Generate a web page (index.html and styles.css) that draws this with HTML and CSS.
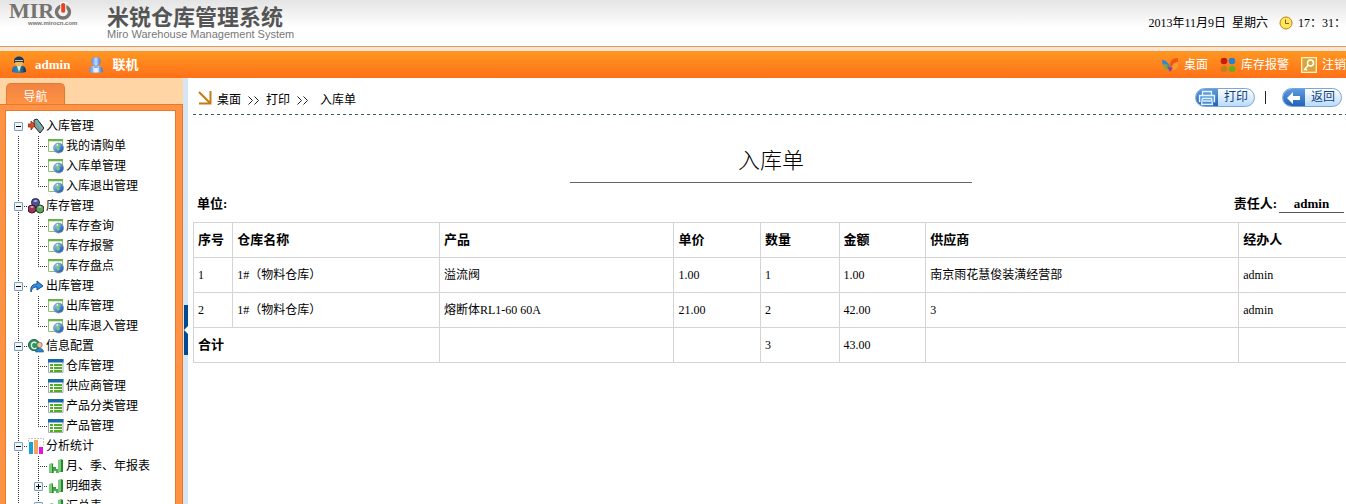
FILE: index.html
```html
<!DOCTYPE html>
<html lang="zh-CN">
<head>
<meta charset="utf-8">
<title>米锐仓库管理系统</title>
<link rel="stylesheet" href="styles.css">
</head>
<body>
<svg class="sprite" width="0" height="0" aria-hidden="true">
  <defs>
    <linearGradient id="blueG" x1="0" y1="0" x2="1" y2="1"><stop offset="0" stop-color="#9fd0f8"/><stop offset="1" stop-color="#104a9c"/></linearGradient>
    <linearGradient id="bodyG" x1="0" y1="0" x2="1" y2="0"><stop offset="0" stop-color="#2c66c0"/><stop offset=".5" stop-color="#2f8f9a"/><stop offset="1" stop-color="#0b2a66"/></linearGradient>
    <linearGradient id="paleG" x1="0" y1="0" x2="1" y2="0"><stop offset="0" stop-color="#5a8ee4"/><stop offset=".5" stop-color="#c3dafb"/><stop offset="1" stop-color="#4474cc"/></linearGradient>
    <linearGradient id="greenG" x1="0" y1="0" x2="0" y2="1"><stop offset="0" stop-color="#7fca7c"/><stop offset=".5" stop-color="#2c9a38"/><stop offset="1" stop-color="#5fba5f"/></linearGradient>
  </defs>
  <symbol id="page" viewBox="0 0 16 16"><path d="M.5 2.500h14v11H.5z" fill="#fff" stroke="#8cc46a"/><path d="M0 1h15v2H0z" fill="#6fb04e"/><path d="M1 3h13v1H1z" fill="#cfeabc"/><circle cx="10.500" cy="10" r="5" fill="url(#blueG)" stroke="#5b87b8" stroke-width=".6"/><path d="M8 7l3-1 2 2-2 1 1 2-2 2-2-3-1-1z" fill="#7cc39b"/><path d="M8 7l2-1v2z" fill="#fff"/></symbol>
  <symbol id="sheet" viewBox="0 0 16 16"><path d="M.5 1.500h14.500v13H.5z" fill="#fff" stroke="#a5adb5"/><path d="M0 1h15.500v3.500H0z" fill="#1769a8"/><path d="M2 6h3v2H2zm0 3h3v2H2zm0 3h3v2H2zM6 6h8v2H6zm0 3h8v2H6zm0 3h8v2H6z" fill="#4fae22"/></symbol>
  <symbol id="bars" viewBox="0 0 16 16"><path d="M1 6h4v3h3v2h2V2h5v12h-4v1H8v-2H6v2H1z" fill="url(#greenG)"/><path d="M1 6l3-1v9l-3 1zm9-4l3-1v12l-3 1z" fill="#7ccc7b"/><path d="M4 5l1 1v9H4zM13 1l2 1v12h-2z" fill="#218a2e"/></symbol>
  <symbol id="chart" viewBox="0 0 16 16"><path d="M.5 4V.5h15v7" fill="none" stroke="#c4c4c4" stroke-dasharray="2 1"/><path d="M1 4h4v12H1z" fill="#15a2d7"/><path d="M6 2h4v14H6z" fill="#f5a45d"/><path d="M11 9h4v7h-4z" fill="#e411df"/></symbol>
  <symbol id="inbound" viewBox="0 0 16 16"><path d="M6 2l3-1 7 9-4 5-6-7z" fill="#8d9695" stroke="#222"/><path d="M8 2l6 9" stroke="#50c6c2" stroke-width="1.500"/><path d="M0 6h3V3l4 4-4 5V9H0z" fill="#e84a26" stroke="#6a2510" stroke-width=".7"/></symbol>
  <symbol id="cubes" viewBox="0 0 16 16"><circle cx="7.500" cy="4.500" r="4" fill="#4c529c" stroke="#20224b"/><circle cx="4" cy="11" r="4" fill="#a03357" stroke="#421629"/><circle cx="12" cy="11" r="4" fill="#5da459" stroke="#204923"/><path d="M5 3l3-1 2 1-3 1zM2 9l2-1 2 1-2 1zm8 0l2-1 2 1-2 1z" fill="#d5c5df"/></symbol>
  <symbol id="outbound" viewBox="0 0 16 16"><path d="M3 14c-1-6 2-8 6-8V3l6 5-6 4V9c-3 0-5 1-6 5z" fill="#2e8ee6" stroke="#174d91"/></symbol>
  <symbol id="config" viewBox="0 0 16 16"><circle cx="6" cy="7" r="5.500" fill="#2d9460" stroke="#1d5d3f"/><path d="M8.500 5C5 3 3 5 3.500 8s3 3 5 2" fill="none" stroke="#dcf7e4" stroke-width="1.400"/><circle cx="11.500" cy="7" r="2.700" fill="#edc39a" stroke="#67472d" stroke-width=".6"/><path d="M7.500 14c0-5 8-5 8 0z" fill="#2c88ce" stroke="#184c80" stroke-width=".6"/></symbol>
</svg>

<header class="masthead">
  <div class="logo">
    <div class="logo-mark"><span>MIR</span><svg width="18" height="18" viewBox="0 0 18 18"><ellipse cx="9" cy="10" rx="6.500" ry="6" fill="none" stroke="#77736f" stroke-width="3.400"/><path d="M6.300 0h6v10h-6z" fill="#fff"/><path d="M7.200 2q2-2 4 0v8q-2 1.500-4 0z" fill="#e8431c"/></svg></div>
    <div class="logo-url">www.mirocn.com</div>
  </div>
  <div class="product">
    <h1>米锐仓库管理系统</h1>
    <p>Miro Warehouse Management System</p>
  </div>
  <div class="clock">
    <span>2013年11月9日&nbsp; 星期六</span>
    <svg width="14" height="14" viewBox="0 0 14 14"><circle cx="7" cy="7" r="6" fill="#ffe65c" stroke="#b78313"/><path d="M6.500 3.500v4H10" fill="none" stroke="#8a5b10"/></svg>
    <span class="time">17：31：</span>
  </div>
</header>

<nav class="toolbar">
  <div class="who">
    <svg width="16" height="18" viewBox="0 0 16 18"><path d="M1 16c0-7 3-6 7-6s7-1 7 6q-7 2-14 0z" fill="url(#bodyG)"/><path d="M6 10h4l-2 6z" fill="#e9f3dc"/><ellipse cx="8" cy="6.500" rx="4" ry="4" fill="#e7b766"/><path d="M3 5c0-6 10-6 10 0v2l-2-1H5L3 7z" fill="#173765"/><path d="M4 4.500h8" stroke="#eac455"/></svg>
    <b>admin</b>
    <svg class="online" width="16" height="18" viewBox="0 0 16 18"><path d="M1 16c0-7 3-6 7-6s7-1 7 6q-7 2-14 0z" fill="url(#paleG)"/><circle cx="8" cy="5.500" r="4.500" fill="url(#paleG)" stroke="#6c97dd" stroke-width=".6"/><path d="M5.500 10h5v6h-5z" fill="#e6effc"/><path d="M6 11h4" stroke="#4c78bd"/></svg>
    <b>联机</b>
  </div>
  <div class="links">
    <a href="#"><svg width="17" height="16" viewBox="0 0 17 16"><path d="M8 9Q4 2 0 3q0 6 4 7z" fill="#3187d1"/><path d="M8 10Q3 5 1 8q1 5 6 5z" fill="#80a743"/><path d="M8 10Q7 1 16 1q1 6-5 9z" fill="#f2541b"/><path d="M9 11q2-6 7-6 1 9-7 8z" fill="#f99a2c"/><path d="M5 9l3 6 3-4z" fill="#8b4299"/></svg>桌面</a>
    <a href="#"><svg width="16" height="16" viewBox="0 0 16 16"><circle cx="4" cy="4" r="3.300" fill="#c71b12"/><circle cx="12" cy="4" r="3.300" fill="#287fd0"/><circle cx="4" cy="12" r="3.300" fill="#c2811c"/><circle cx="12" cy="12" r="3.300" fill="#69ad1e"/></svg>库存报警</a>
    <a href="#"><svg width="16" height="16" viewBox="0 0 16 16"><path d="M.7.7h14.600v14.600H.7z" fill="#d9a53b" stroke="#fff1bd" stroke-width="1.300"/><circle cx="9.500" cy="6" r="3" fill="none" stroke="#fff" stroke-width="1.500"/><path d="M7.500 8L3 13m1-1l2 1" stroke="#fff" stroke-width="1.500"/></svg>注销</a>
  </div>
</nav>

<div class="workspace">
  <aside class="sidebar">
    <div class="tabs"><span class="tab">导航</span></div>
    <div class="panel">
      <ul class="tree">
        <li class="row first"><span class="g"><button class="tg" aria-label="折叠"></button></span><svg><use href="#inbound"/></svg>入库管理</li>
        <li class="row"><span class="g v"></span><span class="g t"></span><svg><use href="#page"/></svg><a href="#">我的请购单</a></li>
        <li class="row"><span class="g v"></span><span class="g t"></span><svg><use href="#page"/></svg><a href="#">入库单管理</a></li>
        <li class="row"><span class="g v"></span><span class="g l"></span><svg><use href="#page"/></svg><a href="#">入库退出管理</a></li>
        <li class="row"><span class="g t"><button class="tg" aria-label="折叠"></button></span><svg><use href="#cubes"/></svg>库存管理</li>
        <li class="row"><span class="g v"></span><span class="g t"></span><svg><use href="#page"/></svg><a href="#">库存查询</a></li>
        <li class="row"><span class="g v"></span><span class="g t"></span><svg><use href="#page"/></svg><a href="#">库存报警</a></li>
        <li class="row"><span class="g v"></span><span class="g l"></span><svg><use href="#page"/></svg><a href="#">库存盘点</a></li>
        <li class="row"><span class="g t"><button class="tg" aria-label="折叠"></button></span><svg><use href="#outbound"/></svg>出库管理</li>
        <li class="row"><span class="g v"></span><span class="g t"></span><svg><use href="#page"/></svg><a href="#">出库管理</a></li>
        <li class="row"><span class="g v"></span><span class="g l"></span><svg><use href="#page"/></svg><a href="#">出库退入管理</a></li>
        <li class="row"><span class="g t"><button class="tg" aria-label="折叠"></button></span><svg><use href="#config"/></svg>信息配置</li>
        <li class="row"><span class="g v"></span><span class="g t"></span><svg><use href="#sheet"/></svg><a href="#">仓库管理</a></li>
        <li class="row"><span class="g v"></span><span class="g t"></span><svg><use href="#sheet"/></svg><a href="#">供应商管理</a></li>
        <li class="row"><span class="g v"></span><span class="g t"></span><svg><use href="#sheet"/></svg><a href="#">产品分类管理</a></li>
        <li class="row"><span class="g v"></span><span class="g l"></span><svg><use href="#sheet"/></svg><a href="#">产品管理</a></li>
        <li class="row"><span class="g t"><button class="tg" aria-label="折叠"></button></span><svg><use href="#chart"/></svg>分析统计</li>
        <li class="row"><span class="g v"></span><span class="g t"></span><svg><use href="#bars"/></svg><a href="#">月、季、年报表</a></li>
        <li class="row"><span class="g v"></span><span class="g t"><button class="tg plus" aria-label="展开"></button></span><svg><use href="#bars"/></svg><a href="#">明细表</a></li>
        <li class="row"><span class="g v"></span><span class="g t"><button class="tg plus" aria-label="展开"></button></span><svg><use href="#bars"/></svg><a href="#">汇总表</a></li>
      </ul>
    </div>
  </aside>
  <div class="splitter"><button class="handle" aria-label="收起导航"><svg width="4" height="8" viewBox="0 0 4 8"><path d="M4 0v8L0 4z" fill="#fff"/></svg></button></div>
  <main class="content">
    <div class="crumbs">
      <svg width="14" height="14" viewBox="0 0 14 14"><path d="M1 1l11 11M12.500 0v12.500H1" fill="none" stroke="#c77a10" stroke-width="2"/></svg>
      <a href="#">桌面</a><svg class="sep" width="12" height="9" viewBox="0 0 12 9"><path d="M.5.5l4 4-4 4m6-8l4 4-4 4" fill="none" stroke="#222"/></svg><a href="#">打印</a><svg class="sep" width="12" height="9" viewBox="0 0 12 9"><path d="M.5.5l4 4-4 4m6-8l4 4-4 4" fill="none" stroke="#222"/></svg><span class="here">入库单</span>
      <div class="actions">
        <button class="pill"><span class="cap"><svg width="18" height="16" viewBox="0 0 18 16"><path d="M4.500 5V1.500h9V5M2.500 11.500h-1v-6h15v6h-1" fill="#5d9ede" stroke="#e3f3ff" stroke-width="1.300"/><path d="M4.500 8.500h9l1 6h-11zM5 11h8" fill="#4c8ed4" stroke="#e3f3ff" stroke-width="1.300"/></svg></span><span class="txt">打印</span></button>
        <i class="bar"></i>
        <button class="pill"><span class="cap"><svg width="14" height="12" viewBox="0 0 14 12"><path d="M0 6l6-6v4h7v4H6v4z" fill="#fff"/></svg></span><span class="txt">返回</span></button>
      </div>
    </div>
    <h2>入库单</h2>
    <div class="meta"><b>单位:</b><div class="owner"><b>责任人:</b><b class="line">admin</b></div></div>
    <table>
      <colgroup><col class="c1"><col class="c2"><col class="c3"><col class="c4"><col class="c5"><col class="c6"><col class="c7"><col class="c8"></colgroup>
      <thead><tr><th>序号</th><th>仓库名称</th><th>产品</th><th>单价</th><th>数量</th><th>金额</th><th>供应商</th><th>经办人</th></tr></thead>
      <tbody>
        <tr><td>1</td><td>1#（物料仓库）</td><td>溢流阀</td><td>1.00</td><td>1</td><td>1.00</td><td>南京雨花慧俊装潢经营部</td><td>admin</td></tr>
        <tr><td>2</td><td>1#（物料仓库）</td><td>熔断体RL1-60 60A</td><td>21.00</td><td>2</td><td>42.00</td><td>3</td><td>admin</td></tr>
        <tr><th colspan="2">合计</th><td></td><td></td><td>3</td><td>43.00</td><td></td><td></td></tr>
      </tbody>
    </table>
  </main>
</div>
</body>
</html>
```
FILE: styles.css
```css
* { box-sizing: border-box; }
body {
  margin: 0; height: 100vh; overflow: hidden;
  display: flex; flex-direction: column;
  font: 12px/20px "Liberation Serif", "Noto Sans CJK SC", sans-serif;
  color: #000; background: #fff;
}
h1, h2, p, ul { margin: 0; padding: 0; font-weight: normal; }
svg { display: block; flex: none; }
a { color: inherit; text-decoration: none; }
button { font: inherit; padding: 0; border: 0; background: none; }
.sprite { position: absolute; }

.masthead {
  flex: none; height: 51px; display: flex; align-items: flex-start;
  padding-left: 9px;
  border-bottom: 4px solid #f3e6d8;
  box-shadow: inset 0 -1px #e59a4c;
  background: linear-gradient(#e4e4e4, #fff 28px);
}
.logo { width: 98px; padding-top: 2px; color: #77736f; }
.logo-mark { display: flex; font: bold 22px/18px "Liberation Serif", serif; }
.logo-url { font: bold 6px/6px "Liberation Sans", sans-serif; padding-left: 19px; }
.product h1 { font: bold 22px/24px "Noto Sans CJK SC", sans-serif; padding: 3px 0 2px; color: #555; }
.product p { font: 11px/11px "Liberation Sans", sans-serif; color: #777; }
.clock { margin-left: auto; display: flex; align-items: center; padding-top: 13px; white-space: nowrap; }
.clock svg { margin: 0 5px 0 11px; }

.toolbar {
  flex: none; height: 27px; display: flex; align-items: center; justify-content: space-between;
  color: #fff; background: linear-gradient(#ff9822, #ff7018);
}
.who { display: flex; align-items: center; padding-left: 11px; gap: 8px; }
.who b { font-size: 13px; }
.who .online { margin-left: 10px; }
.links { display: flex; gap: 12px; white-space: nowrap; }
.links a { display: flex; align-items: center; gap: 5px; }

.workspace { flex: 1; min-height: 0; display: flex; }
.sidebar { flex: none; width: 183px; display: flex; flex-direction: column; background: #ffd5a6; }
.tabs { height: 26px; padding: 5px 6px 0; display: flex; }
.tab {
  width: 59px; text-align: center; line-height: 26px; color: #fff;
  border: 1px solid #e57a2c; border-bottom: 0; border-radius: 5px 5px 0 0;
  background: linear-gradient(#f08442, #ff9244);
}
.panel { flex: 1; min-height: 0; display: flex; border: 1px solid #e57a2c; border-left: 0; border-bottom: 0; padding: 5px 6px 0 5px; background: #ff9244; }
.tree { flex: 1; overflow: hidden; list-style: none; background: #fff; border: 1px solid #e57a2c; border-bottom: 0; padding: 5px 0 0 2px; }
.row { display: flex; align-items: center; height: 20px; line-height: 22px; white-space: nowrap; }
.row svg { width: 16px; height: 16px; margin-right: 2px; }
.g {
  --v: repeating-linear-gradient(#333 0 1px, transparent 1px 2px);
  --h: repeating-linear-gradient(90deg, #333 0 1px, transparent 1px 2px);
  flex: none; width: 20px; height: 20px; display: flex; align-items: center; justify-content: center;
  background-repeat: no-repeat;
}
.g.v { background-image: var(--v); background-size: 1px 100%; background-position: 10px 0; }
.g.t { background-image: var(--v), var(--h); background-size: 1px 100%, 9px 1px; background-position: 10px 0, 10px 10px; }
.g.l { background-image: var(--v), var(--h); background-size: 1px 11px, 9px 1px; background-position: 10px 0, 10px 10px; }
.tg {
  width: 9px; height: 9px; border: 1px solid #7b9ebd; border-radius: 1px;
  background: linear-gradient(#000, #000) center / 5px 1px no-repeat, #f1f4f7;
}
.tg.plus { background: linear-gradient(#000, #000) center / 5px 1px no-repeat, linear-gradient(#000, #000) center / 1px 5px no-repeat, #f1f4f7; }

.splitter { flex: none; width: 5px; background: #d6e5f2; display: flex; align-items: center; justify-content: flex-end; padding-top: 78px; }
.handle { width: 4px; height: 50px; background: #004a94; display: flex; align-items: center; justify-content: flex-end; }

.content { flex: 1; min-width: 0; padding-left: 5px; margin-right: -3px; }
.crumbs {
  height: 37px; display: flex; align-items: center; padding: 2px 7px 0 5px;
  background: repeating-linear-gradient(90deg, #2a6a4c 0 3px, transparent 3px 6px) bottom / 100% 1px no-repeat;
}
.crumbs > a { padding: 5px 0 0 5px; }
.crumbs .sep { margin: 5px 1px 0 7px; }
.here { padding: 5px 0 0 10px; }
.actions { margin-left: auto; display: flex; align-items: center; }
.pill {
  display: flex; align-items: stretch; width: 60px; height: 19px; overflow: hidden;
  border: 1px solid #7ba6dc; border-radius: 10px;
  background: linear-gradient(#fff, #b9dbfa); color: #123f80;
}
.cap { width: 22px; display: flex; align-items: center; justify-content: center; background: linear-gradient(#5d9be0, #2462b8); }
.txt { flex: 1; line-height: 17px; text-align: center; }
.bar { width: 1px; height: 13px; background: #222; margin: 0 16px 0 10px; }
h2 {
  width: 402px; margin: 28px auto 0; height: 40px; border-bottom: 1px solid #666;
  text-align: center; font: 300 22px/30px "Noto Sans CJK SC", sans-serif;
}
.meta { display: flex; justify-content: space-between; padding: 11px 5px 8px 4px; font-size: 13px; }
.owner { display: flex; }
.line { width: 65px; height: 19px; text-align: center; border-bottom: 1px solid #555; margin-left: 2px; }
table { width: 100%; table-layout: fixed; border-collapse: collapse; }
th, td { height: 35px; padding: 0 4px; border: 1px solid #d4d4d4; text-align: left; }
th { font-size: 13px; }
.c1 { width: 3.4%; }
.c2 { width: 17.9%; }
.c3 { width: 20.3%; }
.c4 { width: 7.5%; }
.c5 { width: 6.8%; }
.c6 { width: 7.5%; }
.c7 { width: 27.1%; }
.c8 { width: 9.5%; }
```
